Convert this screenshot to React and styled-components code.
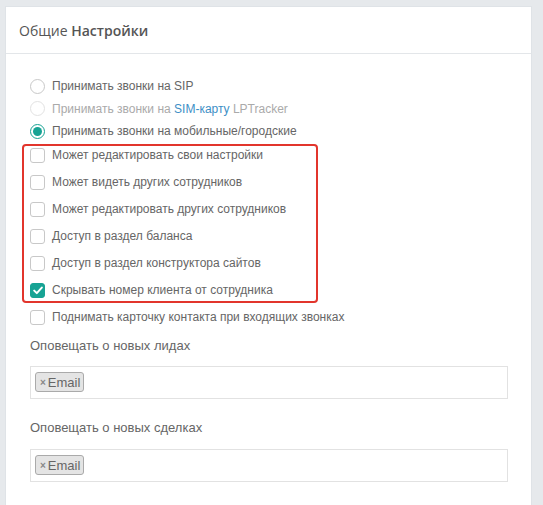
import React from 'react';
import styled, { createGlobalStyle } from 'styled-components';

const GlobalStyle = createGlobalStyle`
  html, body {
    margin: 0;
    padding: 0;
    background: #e6e9ec;
  }
  body {
    font-family: "Liberation Sans", Arial, sans-serif;
    overflow: hidden;
  }
`;

const TEAL = '#17a394';

const Page = styled.div`
  padding: 6px 11px 0 5px;
  height: 505px;
  box-sizing: border-box;
  overflow: hidden;
`;

const Card = styled.section`
  background: #fff;
  border: 1px solid #dfe3e7;
  border-bottom: none;
  min-height: 520px;
`;

const CardHeader = styled.header`
  height: 46px;
  display: flex;
  align-items: center;
  padding: 0 13px;
  border-bottom: 1px solid #e3e6e9;
`;

const Title = styled.h3`
  margin: 0;
  font-family: "Open Sans", sans-serif;
  font-size: 14px;
  font-weight: 400;
  color: #555;
  b {
    font-weight: 600;
  }
`;

const CardBody = styled.div`
  padding: 21px 24px 0 24px;
  display: flex;
  flex-direction: column;
`;

const Option = styled.label`
  display: flex;
  align-items: center;
  gap: 7px;
  height: ${(p) => p.$h || 18}px;
  font-size: 12px;
  color: ${(p) => (p.$disabled ? '#aaa' : '#666')};
  white-space: nowrap;
  margin-top: ${(p) => p.$mt || 0}px;
`;

const Radio = styled.span`
  width: 15px;
  height: 15px;
  box-sizing: border-box;
  border-radius: 50%;
  border: 1px solid ${(p) => (p.$checked ? TEAL : p.$disabled ? '#e2e2e2' : '#c8c8c8')};
  display: flex;
  align-items: center;
  justify-content: center;
  flex: none;
  &::after {
    content: '';
    display: ${(p) => (p.$checked ? 'block' : 'none')};
    width: 9px;
    height: 9px;
    border-radius: 50%;
    background: ${TEAL};
  }
`;

const Box = styled.span`
  width: 15px;
  height: 15px;
  box-sizing: border-box;
  border-radius: 3px;
  border: 1px solid ${(p) => (p.$checked ? TEAL : '#c8c8c8')};
  background: ${(p) => (p.$checked ? TEAL : '#fff')};
  display: flex;
  align-items: center;
  justify-content: center;
  flex: none;
`;

const Link = styled.span`
  color: #3d8fc6;
`;

const Group = styled.div`
  width: 280px;
  margin: 1.5px 0 0 -8px;
  border: 2px solid #e2352c;
  border-radius: 4px;
  padding: 0 6px 2px;
  display: flex;
  flex-direction: column;
  gap: 9px;
`;

const FieldLabel = styled.div`
  font-size: 13px;
  color: #666;
  line-height: 18px;
  margin-top: ${(p) => p.$mt}px;
`;

const TagInput = styled.div`
  margin-top: ${(p) => p.$mt}px;
  width: 478px;
  height: 33px;
  box-sizing: border-box;
  border: 1px solid #e2e2e2;
  padding: 5px 4px;
  display: flex;
  align-items: flex-start;
`;

const Tag = styled.span`
  display: inline-flex;
  align-items: center;
  height: 20px;
  box-sizing: border-box;
  padding: 0 3px 0 4px;
  border: 1px solid #aaa;
  border-radius: 3px;
  background: #e4e4e4;
  font-size: 13px;
  color: #666;
  gap: 2px;
  span {
    font-size: 10px;
    color: #888;
    font-weight: 700;
  }
`;

const Check = () => (
  <svg width="10" height="9" viewBox="0 0 10 9">
    <path d="M1.2 4.6 L3.8 7.1 L8.8 1.6" fill="none" stroke="#fff" strokeWidth="2" strokeLinecap="round" strokeLinejoin="round" />
  </svg>
);

const perms = [
  ['Может редактировать свои настройки', false],
  ['Может видеть других сотрудников', false],
  ['Может редактировать других сотрудников', false],
  ['Доступ в раздел баланса', false],
  ['Доступ в раздел конструктора сайтов', false],
  ['Скрывать номер клиента от сотрудника', true],
];

export default function App() {
  return (
    <>
      <GlobalStyle />
      <Page>
        <Card>
          <CardHeader>
            <Title>
              Общие <b>Настройки</b>
            </Title>
          </CardHeader>
          <CardBody>
            <Option $h={22.5}>
              <Radio />
              Принимать звонки на SIP
            </Option>
            <Option $h={22.5} $disabled>
              <Radio $disabled />
              <span>
                Принимать звонки на <Link>SIM-карту</Link> LPTracker
              </span>
            </Option>
            <Option $h={22.5}>
              <Radio $checked />
              Принимать звонки на мобильные/городские
            </Option>
            <Group>
              {perms.map(([text, on]) => (
                <Option key={text}>
                  <Box $checked={on}>{on && <Check />}</Box>
                  {text}
                </Option>
              ))}
            </Group>
            <Option $mt={5}>
              <Box />
              Поднимать карточку контакта при входящих звонках
            </Option>
            <FieldLabel $mt={11}>Оповещать о новых лидах</FieldLabel>
            <TagInput $mt={11}>
              <Tag>
                <span>×</span>Email
              </Tag>
            </TagInput>
            <FieldLabel $mt={20}>Оповещать о новых сделках</FieldLabel>
            <TagInput $mt={12}>
              <Tag>
                <span>×</span>Email
              </Tag>
            </TagInput>
            <FieldLabel $mt={20}>Должность сотрудника</FieldLabel>
          </CardBody>
        </Card>
      </Page>
    </>
  );
}
